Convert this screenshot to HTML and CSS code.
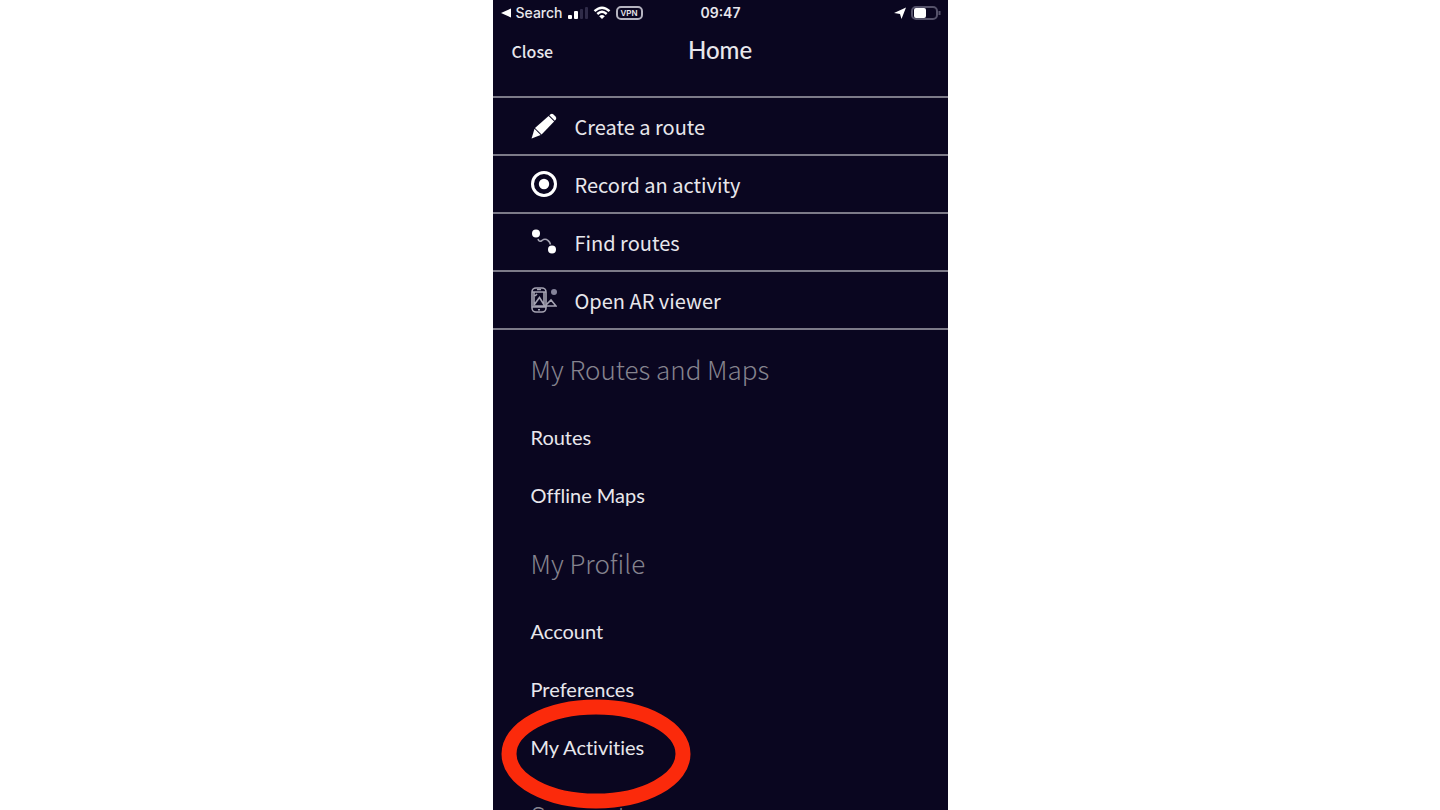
FILE: index.html
```html
<!DOCTYPE html>
<html lang="en">

<head>
	<title>Home</title>
	<meta charset=utf-8>
	<meta name=viewport content="width=device-width, initial-scale=1">
	<link rel="stylesheet" href="styles.css">
</head>

<body>
	<div class="phone">
		<div class="status">
			<div class="status-left">
				<svg class="back" viewBox="0 0 10 10"><path d="M0 5L10 0.500V9.500Z" /></svg>
				<span>Search</span>
				<svg class="signal" viewBox="0 0 20 12">
					<rect x="0" y="8" width="4" height="4" rx="1" />
					<rect x="6" y="4" width="4" height="8" rx="1" />
					<rect class="off" x="12" y="2" width="3" height="10" rx="1" />
					<rect class="off" x="17" y="0" width="3" height="12" rx="1" />
				</svg>
				<svg class="wifi" viewBox="0 0 18 14">
					<path d="M1.500 5.200Q9 -1.700 16.500 5.200M4.300 8Q9 3.700 13.700 8" />
					<path class="dot" d="M9 13L6.200 10.200Q9 7.800 11.800 10.200Z" />
				</svg>
				<span class="vpn">VPN</span>
			</div>
			<div class="clock">09:47</div>
			<div class="status-right">
				<svg class="arrow" viewBox="0 0 12 12"><path d="M12 0.500L7.500 12L6 7L0 6Z" /></svg>
				<svg class="battery" viewBox="0 0 30 14">
					<rect x="1" y="1" width="25" height="12" rx="4" />
					<rect class="level" x="3" y="2" width="12" height="10" rx="2" />
					<path d="M28.500 5V9" />
				</svg>
			</div>
		</div>
		<header class="top">
			<button class="close">Close</button>
			<h1>Home</h1>
		</header>
		<nav>
			<ul class="actions">
				<li><a href="#">
					<svg viewBox="0 0 26 26">
						<path class="fill" d="M18.300 2.300L19.500 1.200Q21 0 22.500 1.500L24.500 3.500Q26 5 24.800 6.500L23.800 7.700Z" />
						<path class="fill" d="M17.600 3L23.100 8.400L10.600 21.500L4 15Z" />
						<path class="fill" d="M3.500 15.800L9.700 22.100L2.500 24.800L1.200 23.500Z" />
						<path class="fill" d="M1.300 23.200L2.800 24.700L0.500 25.500Z" />
					</svg>
					Create a route</a></li>
				<li><a href="#">
					<svg viewBox="0 0 26 26">
						<circle class="line" cx="13" cy="13" r="11.500" />
						<circle class="fill" cx="13" cy="13" r="5.200" />
					</svg>
					Record an activity</a></li>
				<li><a href="#">
					<svg viewBox="0 0 26 26">
						<path class="thin" d="M7 10Q8 13.500 11 11.500Q14 9 17 11.500Q19 13 19.500 15.500" />
						<circle class="fill" cx="5" cy="4.500" r="4" />
						<circle class="fill" cx="21" cy="20.500" r="4" />
					</svg>
					Find routes</a></li>
				<li><a href="#">
					<svg class="grey" viewBox="0 0 26 26">
						<rect class="thin" x="1" y="1" width="14" height="24" rx="4" />
						<path class="thin" d="M1 5H15M1 20H15M3 5V20M13 5V20M6 2.500H10M7 22.700H9M3 18L8.500 10.500L13.500 18.500M4 19H25L20 13L15 18M4 9L6 7" />
						<circle class="fill" cx="23" cy="5" r="3" />
					</svg>
					Open AR viewer</a></li>
			</ul>
			<h2>My Routes and Maps</h2>
			<ul class="links">
				<li><a href="#">Routes</a></li>
				<li><a href="#">Offline Maps</a></li>
			</ul>
			<h2>My Profile</h2>
			<ul class="links">
				<li><a href="#">Account</a></li>
				<li><a href="#">Preferences</a></li>
				<li class="marked"><a href="#">My Activities</a>
					<svg class="ring" viewBox="0 0 190 112"><ellipse cx="95" cy="56" rx="87" ry="47" /></svg>
				</li>
			</ul>
			<h2>Support</h2>
		</nav>
	</div>
</body>

</html>
```

FILE: styles.css
```css
* {
	box-sizing: border-box;
}

body {
	margin: 0;
	background: white;
	font-family: 'Noto Sans CJK SC', sans-serif;
}

ul {
	list-style: none;
	margin: 0;
	padding: 0;
}

a {
	color: inherit;
	text-decoration: none;
}

.phone {
	width: 100%;
	max-width: 455px;
	height: 100vh;
	margin: 0 auto;
	overflow: hidden;
	background: #0a0620;
	color: #e8e7ec;
}

.status {
	display: grid;
	grid-template-columns: 1fr auto 1fr;
	align-items: center;
	height: 25px;
	padding: 0 7px 0 8px;
	font-family: Inter, sans-serif;
	font-size: 14px;
	font-weight: 500;
}

.status svg {
	fill: white;
}

.status-left,
.status-right {
	display: flex;
	align-items: center;
	gap: 5px;
}

.status-right {
	justify-content: flex-end;
}

.back {
	width: 10px;
	height: 10px;
}

.signal {
	width: 20px;
	height: 12px;
}

.status .signal .off {
	fill: #2f2b48;
}

.wifi {
	width: 18px;
	height: 14px;
}

.status .wifi path {
	fill: none;
	stroke: white;
	stroke-width: 2.4;
}

.status .wifi .dot {
	fill: white;
	stroke: none;
}

.vpn {
	padding: 0 3px;
	border: 2px solid #b5b4c0;
	border-radius: 5px;
	font-size: 8px;
	line-height: 10px;
	font-weight: 600;
}

.clock {
	font-weight: 600;
}

.arrow {
	width: 12px;
	height: 12px;
}

.battery {
	width: 30px;
	height: 14px;
}

.status .battery {
	fill: none;
	stroke: #55526a;
	stroke-width: 2;
}

.status .battery .level {
	fill: white;
	stroke: none;
}

.top {
	display: grid;
	grid-template-columns: 1fr auto 1fr;
	align-items: center;
	height: 71px;
	padding: 0 19px 22px;
}

.close {
	justify-self: start;
	padding: 3px 0 0;
	border: 0;
	background: none;
	color: inherit;
	font: 500 16px 'Noto Sans CJK SC', sans-serif;
}

h1 {
	margin: 0;
	font: 500 24px Lato, sans-serif;
}

.actions {
	border-top: 2px solid #7c7a88;
}

.actions li {
	border-bottom: 2px solid #7c7a88;
}

.actions a {
	display: flex;
	align-items: center;
	gap: 18px;
	height: 56px;
	padding-left: 38px;
	font-size: 20px;
	font-weight: 400;
}

.actions svg {
	width: 26px;
	height: 26px;
}

.fill {
	fill: white;
}

.line {
	fill: none;
	stroke: white;
	stroke-width: 3;
}

.thin {
	fill: none;
	stroke: #a5a3b2;
	stroke-width: 1.6;
}

.grey .fill {
	fill: #85839a;
}

h2 {
	margin: 0;
	padding: 0 38px;
	color: #85838e;
	font-size: 26px;
	font-weight: 300;
	line-height: 78px;
}

.links a {
	display: block;
	padding: 0 38px;
	font-family: Lato, sans-serif;
	font-size: 20px;
	line-height: 58px;
	font-variant-ligatures: none;
}

.marked {
	position: relative;
}

/* sits over the row and its neighbours */
.ring {
	position: absolute;
	top: -20px;
	left: 8px;
	width: 190px;
	height: 112px;
	pointer-events: none;
}

.ring ellipse {
	fill: none;
	stroke: #fb2a0b;
	stroke-width: 15;
}
```
